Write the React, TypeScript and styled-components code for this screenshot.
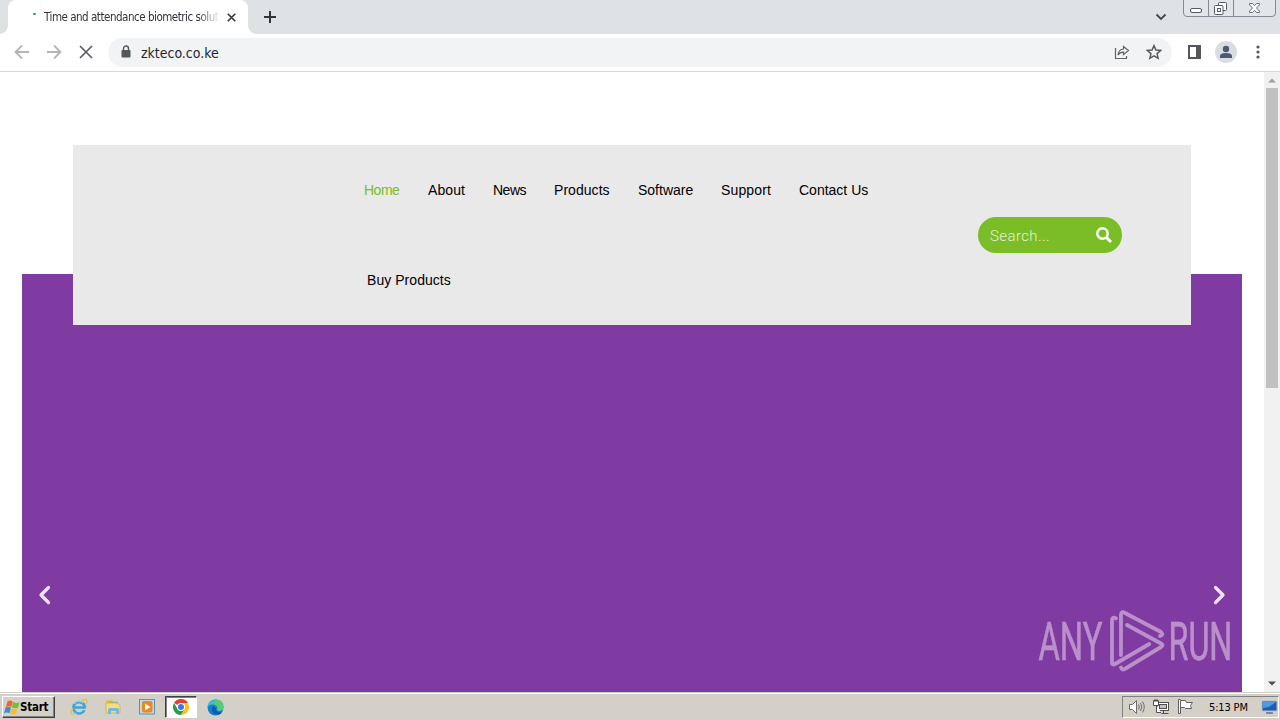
import React from "react";
import styled, { createGlobalStyle } from "styled-components";

const GlobalStyle = createGlobalStyle`
  * { box-sizing: border-box; }
  body {
    margin: 0;
    overflow: hidden;
    font-family: "Liberation Sans", Arial, sans-serif;
  }
  svg { display: block; flex: none; }
`;

const Screen = styled.div`
  display: flex;
  flex-direction: column;
  width: 1280px;
  height: 720px;
  background: #fff;
  overflow: hidden;
`;

const TabStrip = styled.div`
  display: flex;
  height: 34px;
  background: #dee1e6;
`;

const TabCurve = styled.div<{ $side: "left" | "right" }>`
  width: 8px;
  height: 34px;
  background: radial-gradient(circle at ${(p) => (p.$side === "left" ? "0 26px" : "8px 26px")}, #dee1e6 7.5px, #fff 8px);
  clip-path: inset(26px 0 0 0);
`;

const Tab = styled.div`
  display: flex;
  align-items: center;
  width: 240px;
  height: 34px;
  padding: 0 12px 0 24px;
  border-radius: 8px 8px 0 0;
  background: #fff;
`;

const Spinner = styled.div`
  width: 3px;
  height: 2px;
  margin: -6px 8px 0 1px;
  border-radius: 1px;
  background: #3f7de0;
`;

const TabTitle = styled.div`
  width: 174px;
  overflow: hidden;
  white-space: nowrap;
  font: 11.5px "DejaVu Sans Condensed", "DejaVu Sans", sans-serif;
  font-stretch: condensed;
  letter-spacing: -0.48px;
  color: #30343a;
  mask-image: linear-gradient(to right, #000 154px, transparent 176px);
`;

const TabClose = styled.div`
  margin-left: auto;
`;

const NewTab = styled.div`
  padding: 11px 0 0 8px;
`;

const WindowControls = styled.div`
  display: flex;
  align-items: flex-start;
  margin-left: auto;
  gap: 16px;
`;

const Chevron = styled.div`
  padding-top: 13px;
`;

const Toolbar = styled.div`
  display: flex;
  align-items: center;
  height: 38px;
  padding: 0 14px 1px 14px;
  border-bottom: 1px solid #d5d7da;
`;

const NavButtons = styled.div`
  display: flex;
  gap: 16px;
  margin-right: 14px;
`;

const AddressBar = styled.div`
  display: flex;
  align-items: center;
  width: 1064px;
  height: 29px;
  padding: 0 10px 0 12px;
  border-radius: 15px;
  background: #f1f3f4;
`;

const Address = styled.div`
  flex: 1;
  margin-left: 9px;
  padding-top: 1px;
  font: 14px "DejaVu Sans Condensed", "DejaVu Sans", sans-serif;
  font-stretch: condensed;
  letter-spacing: -0.02px;
  color: #24282d;
`;

const AddressIcons = styled.div`
  display: flex;
  gap: 16px;
`;

const ToolbarIcons = styled.div`
  display: flex;
  align-items: center;
  margin-left: 15px;
`;

const Avatar = styled.div`
  display: flex;
  align-items: center;
  justify-content: center;
  width: 22px;
  height: 22px;
  margin: 0 15px 0 13px;
  border-radius: 50%;
  background: #d9dde2;
`;

const Viewport = styled.div`
  display: flex;
  height: 620px;
`;

const Page = styled.div`
  position: relative;
  display: flex;
  width: 1264px;
  padding: 202px 22px 0;
`;

const Slider = styled.div`
  display: flex;
  justify-content: space-between;
  width: 1220px;
  height: 418px;
  padding: 311px 16px 0;
  background: #803ba2;
`;

/* The header floats over the top edge of the slider */
const Header = styled.header`
  position: absolute;
  top: 73px;
  left: 73px;
  display: flex;
  width: 1118px;
  height: 180px;
  padding-left: 277px;
  align-items: center;
  background: #e9e9e9;
`;

const Menu = styled.nav`
  display: flex;
  flex-wrap: wrap;
  width: 628px;
`;

const MenuItem = styled.a<{ $width: number; $active?: boolean; $indent?: number; $spacing?: number }>`
  width: ${(p) => p.$width}px;
  margin-left: ${(p) => p.$indent || 0}px;
  padding-left: 14px;
  font-size: 14px;
  line-height: 90px;
  letter-spacing: ${(p) => p.$spacing || 0}px;
  white-space: nowrap;
  color: ${(p) => (p.$active ? "#7abd26" : "#000")};
`;

const Search = styled.div`
  display: flex;
  align-items: center;
  justify-content: space-between;
  width: 144px;
  height: 36px;
  padding: 0 10px 0 12px;
  border-radius: 18px;
  background: #7abd26;
`;

const Placeholder = styled.span`
  padding-top: 2px;
  font: 300 15px Roboto, sans-serif;
  letter-spacing: 0.4px;
  color: #e6f3d3;
`;

const Watermark = styled.svg`
  position: absolute;
  left: 1034px;
  top: 532px;
`;

const ScrollBar = styled.div`
  display: flex;
  flex-direction: column;
  align-items: center;
  width: 16px;
  background: #f1f1f1;
`;

const ScrollArrow = styled.div<{ $down?: boolean }>`
  display: flex;
  align-items: center;
  justify-content: center;
  width: 16px;
  height: ${(p) => (p.$down ? 18 : 16)}px;
  margin-top: ${(p) => (p.$down ? "auto" : "0")};
`;

const Thumb = styled.div`
  width: 12px;
  height: 300px;
  background: #c1c1c1;
`;

const Taskbar = styled.div`
  display: flex;
  align-items: center;
  height: 28px;
  padding: 2px 1px 1px 2px;
  border-top: 1px solid #d4d0c8;
  box-shadow: inset 0 1px 0 #fff;
  background: #d4d0c8;
`;

const StartButton = styled.div`
  display: flex;
  align-items: center;
  width: 53px;
  height: 22px;
  padding-left: 1px;
  border: 1px solid;
  border-color: #fff #404040 #404040 #fff;
  box-shadow: inset -1px -1px 0 #808080;
  font: bold 11.5px "DejaVu Sans Condensed", "DejaVu Sans", sans-serif;
  font-stretch: condensed;
  letter-spacing: -0.25px;
  color: #000;
`;

const TaskButtons = styled.div`
  display: flex;
  margin-left: 8px;
  gap: 2px;
`;

const TaskButton = styled.div<{ $pressed?: boolean }>`
  display: flex;
  align-items: center;
  justify-content: center;
  width: 32px;
  height: 22px;
  border: 1px solid transparent;
  ${(p) => p.$pressed && "border-color: #404040 #fff #fff #404040; background: #fff; box-shadow: inset 1px 1px 0 #808080;"}
`;

const Tray = styled.div`
  display: flex;
  align-items: center;
  width: 157px;
  height: 22px;
  margin-left: auto;
  padding-left: 5px;
  gap: 7px;
  border: 1px solid;
  border-color: #808080 #fff #fff #808080;
`;

const Clock = styled.div`
  width: 43px;
  margin: 0 2px 0 8px;
  white-space: nowrap;
  font: 11px "DejaVu Sans Condensed", "DejaVu Sans", sans-serif;
  font-stretch: condensed;
  letter-spacing: -0.15px;
  color: #000;
`;

const menuItems = [
  { label: "Home", width: 64, active: true, spacing: -0.5 },
  { label: "About", width: 65, spacing: 0.1 },
  { label: "News", width: 61, spacing: -0.5 },
  { label: "Products", width: 84, spacing: 0.05 },
  { label: "Software", width: 83, spacing: 0 },
  { label: "Support", width: 78, spacing: 0.15 },
  { label: "Contact Us", width: 100, spacing: 0 },
  { label: "Buy Products", width: 120, indent: 3, spacing: 0.05 },
];

const CloseIcon = ({ size, color, width }: { size: number; color: string; width: number }) => (
  <svg width={size} height={size} viewBox="0 0 12 12" stroke={color} strokeWidth={width}>
    <path d="M1 1 11 11M11 1 1 11" />
  </svg>
);

const ArrowIcon = ({ right }: { right?: boolean }) => (
  <svg width="16" height="16" viewBox="0 0 16 16" fill="none" stroke="#b3b5b8" strokeWidth="1.8">
    <path d={right ? "M1 8H14M8 1.5 14.5 8 8 14.5" : "M15 8H2M8 1.5 1.5 8 8 14.5"} />
  </svg>
);

const WindowButtons = () => (
  <svg width="97" height="18" viewBox="0 0 97 18" fill="none">
    <path d="M.5 0V13Q.5 16.5 4 16.5H89Q92.500 16.500 92.500 13V0" fill="#e2e5e9" stroke="#858993" />
    <path d="M25.500 0V16M50.500 0V16" stroke="#858993" />
    <rect x="7.500" y="8.500" width="11" height="4" rx="1.500" fill="#fff" stroke="#555a63" />
    <rect x="35.500" y="2.500" width="8" height="8" rx="1" fill="#fff" stroke="#555a63" />
    <rect x="31.500" y="5.500" width="8.500" height="9" rx="1" fill="#fff" stroke="#555a63" />
    <rect x="34.500" y="8.500" width="3" height="3" stroke="#555a63" />
    <path d="M66.500 3.500H69.500L71.500 5.700 73.500 3.500H76.500V4.800L73.500 8 76.500 11.200V12.500H73.500L71.500 10.300 69.500 12.500H66.500V11.200L69.500 8 66.500 4.800Z" fill="#fff" stroke="#6a6e76" />
  </svg>
);

const SlideArrow = ({ right }: { right?: boolean }) => (
  <svg width="14" height="20" viewBox="0 0 14 20" fill="none" stroke="#efe2f3" strokeWidth="3.2" strokeLinecap="round" strokeLinejoin="round">
    <path d={right ? "M3.500 2.500 11 10 3.500 17.500" : "M10.500 2.500 3 10 10.500 17.500"} />
  </svg>
);

const AnyRun = () => (
  <Watermark width="202" height="76" viewBox="0 0 202 76" opacity="0.5">
    <g fill="#f2e4f2" stroke="#f2e4f2" strokeWidth=".6" fontFamily="Roboto, sans-serif" fontSize="53">
      <text transform="translate(4.500 56) scale(.62 1)" textLength="103" lengthAdjust="spacingAndGlyphs">ANY</text>
      <text transform="translate(134.500 56) scale(.62 1)" textLength="103" lengthAdjust="spacingAndGlyphs">RUN</text>
    </g>
    <g fill="none" stroke="#f2e4f2" strokeWidth="3.800" strokeLinejoin="round" strokeLinecap="round">
      <path d="M82 14.300Q78 12 78 17V58.500Q78 61.500 81 60L115.300 40" />
      <path d="M87 51V11Q87 6.500 91 9L127 28Q130 31 126 32" />
      <path d="M93 21 127 39.500Q130 41 127 43L91.500 64.500Q88 67 87 63.500" />
    </g>
  </Watermark>
);

const InternetExplorerIcon = () => (
  <svg width="18" height="18" viewBox="0 0 18 18" fill="none">
    <path d="M14.300 12.200A5.700 5.700 0 1 1 14.800 9.500H4.500" stroke="#3aa6de" strokeWidth="2.600" />
    <path d="M12 2.800C17-.2 18.500 2.500 15.500 6.500M3 10C-.8 15 1 18 6 15.200" stroke="#e8c04a" strokeWidth="1.400" />
    <path d="M4 6Q9 1 13 5" stroke="#9edcf6" strokeWidth="1" />
  </svg>
);

const FolderIcon = () => (
  <svg width="18" height="18" viewBox="0 0 18 18">
    <path d="M2 3 3 2H8L9 4H14V7H2Z" fill="#e4bd57" />
    <rect x="5" y="3.500" width="9" height="6" fill="#80c88b" />
    <path d="M2 5H13L16 7V15H2Z" fill="#f6dc83" stroke="#d2a944" strokeWidth=".7" />
    <path d="M4 16V12Q4 10 6 10H13Q15 10 15 12V16H12V13H7V16Z" fill="#72b9df" />
  </svg>
);

const PlayerIcon = () => (
  <svg width="18" height="18" viewBox="0 0 18 18">
    <rect x="1.500" y="1.500" width="15" height="14.500" fill="#b9d9ec" stroke="#5892ba" />
    <rect x="4" y="3" width="10.500" height="11.500" rx="2" fill="#f28718" />
    <path d="M7 5.500 12.500 9 7 12.500Z" fill="#fff" />
  </svg>
);

const ChromeIcon = () => (
  <svg width="16" height="16" viewBox="0 0 16 16">
    <path d="M8 8 1.070 4A8 8 0 0 1 14.930 4Z" fill="#e43e2f" />
    <path d="M8 4H14.930A8 8 0 0 1 8 16L11.500 10Z" fill="#fbc116" />
    <path d="M1.070 4A8 8 0 0 0 8 16L11.500 10H8L4.500 10Z" fill="#2b9b49" />
    <circle cx="8" cy="8" r="4" fill="#fff" />
    <circle cx="8" cy="8" r="3" fill="#3b78dd" />
  </svg>
);

const EdgeIcon = () => (
  <svg width="17" height="17" viewBox="0 0 17 17">
    <circle cx="8.500" cy="8.500" r="8" fill="#1680cf" />
    <path d="M.5 8C1-1 15-2 16.500 7.500 17 12 12 12.500 10 11 12 8 9 5 5.500 5.500 3 5.700 1 7 .5 8Z" fill="#38bfd0" />
    <path d="M9 1C14 0 17 4 16.500 8.500 16 12 12 12 10 11 12 8 9 6 7 5.500Z" fill="#57cc76" />
    <path d="M6 7C3 11 6 16 11 15.800 13 15.500 14.500 14 15 13 12 14 9 12.500 9 10.500 9 9 8 8 6 7Z" fill="#1559a6" />
  </svg>
);

const StartFlag = () => (
  <svg width="16" height="17" viewBox="0 0 16 17">
    <path d="M3.500 2.500Q6 .5 8.800 2.500L7.200 8Q4.500 6.500 1.800 8Z" fill="#ed6331" />
    <path d="M9.300 2.800Q12 5 15.500 3.200L14 8.700Q11 10 7.700 8.300Z" fill="#79b843" />
    <path d="M1.600 8.500Q4 7 7 8.700L5.400 14.300Q3 12.500 0 14.300Z" fill="#398fd1" />
    <path d="M7.500 9Q10 11 13.800 9.300L12.200 14.800Q9 16.500 6 14.600Z" fill="#f5bd30" />
  </svg>
);

const TrayIcons = () => (
  <>
    <svg width="18" height="16" viewBox="0 0 18 16" fill="none" stroke="#6c6c6c">
      <path d="M1.500 5.500H4.500L8.500 1.500V14.500L4.500 10.500H1.500Z" fill="#fff" />
      <path d="M10.500 5.500Q12 8 10.500 10.500M12.500 4Q15 8 12.500 12M14.500 2.500Q18 8 14.500 13.500" />
    </svg>
    <svg width="17" height="16" viewBox="0 0 17 16" fill="#fff" stroke="#505050">
      <rect x="4.500" y="3.500" width="11" height="8" />
      <rect x="6.500" y="5.500" width="7" height="4" fill="#c4c4c4" />
      <path d="M8.500 14.500H15.500M10.500 12V14M3.500 6V13.500H8M.5 1.500H5.500V6.500H.5ZM2 0V3M4 0V3" />
    </svg>
    <svg width="17" height="16" viewBox="0 0 17 16" fill="#fff" stroke="#606060">
      <path d="M1.500 .5H3.500V1.500H8.500L9.500 3.500H15.500L13.500 6.500 14.500 9.500H8.500L7.500 8.500H3.500V14.500H1.500Z" />
      <path d="M3.500 1.500V8.500" />
    </svg>
  </>
);

function App() {
  return (
    <Screen>
      <GlobalStyle />
      <TabStrip>
        <TabCurve $side="left" />
        <Tab>
          <Spinner />
          <TabTitle>Time and attendance biometric soluti</TabTitle>
          <TabClose><CloseIcon size={9} color="#34373b" width={2.2} /></TabClose>
        </Tab>
        <TabCurve $side="right" />
        <NewTab>
          <svg width="12" height="12" viewBox="0 0 12 12" stroke="#303339" strokeWidth="2">
            <path d="M6 0V12M0 6H12" />
          </svg>
        </NewTab>
        <WindowControls>
          <Chevron>
            <svg width="12" height="8" viewBox="0 0 12 8" fill="none" stroke="#44474d" strokeWidth="1.800">
              <path d="M1.500 1.500 6 6 10.500 1.500" />
            </svg>
          </Chevron>
          <WindowButtons />
        </WindowControls>
      </TabStrip>
      <Toolbar>
        <NavButtons>
          <ArrowIcon />
          <ArrowIcon right />
          <svg width="16" height="16" viewBox="0 0 16 16" stroke="#5b5e62" strokeWidth="1.700">
            <path d="M2 2 14 14M14 2 2 14" />
          </svg>
        </NavButtons>
        <AddressBar>
          <svg width="12" height="14" viewBox="0 0 12 14">
            <path d="M3.500 6V3.500A2.500 2.500 0 0 1 8.500 3.500V6" fill="none" stroke="#55595e" strokeWidth="1.400" />
            <rect x="1.500" y="5" width="9" height="7.500" rx="1" fill="#55595e" />
          </svg>
          <Address>zkteco.co.ke</Address>
          <AddressIcons>
            <svg width="16" height="16" viewBox="0 0 16 16" fill="none" stroke="#5f6368" strokeWidth="1.200">
              <path d="M1.500 4V14.500H12.500V12M9.500 2.500 14.500 6.500 9.500 10.500V8.200Q6 8 4 11 4.500 5.500 9.500 5Z" />
            </svg>
            <svg width="16" height="16" viewBox="0 0 24 24" fill="none" stroke="#55595e" strokeWidth="2.200">
              <path d="M12 2.500 14.900 9.100 22 9.700 16.600 14.400 18.200 21.400 12 17.700 5.800 21.400 7.400 14.400 2 9.700 9.100 9.100Z" />
            </svg>
          </AddressIcons>
        </AddressBar>
        <ToolbarIcons>
          <svg width="15" height="14" viewBox="0 0 15 14">
            <path d="M2 1H13V13H2Z" fill="none" stroke="#55575c" strokeWidth="2" />
            <rect x="9" y="0" width="5" height="14" fill="#55575c" />
          </svg>
          <Avatar>
            <svg width="14" height="14" viewBox="0 0 14 14" fill="#4b5974">
              <circle cx="7" cy="4" r="3.200" />
              <path d="M1 13V11Q1 8 7 8T13 11V13Z" />
            </svg>
          </Avatar>
          <svg width="12" height="14" viewBox="0 0 12 14" fill="#55585d">
            <circle cx="6" cy="2" r="1.600" /><circle cx="6" cy="7" r="1.600" /><circle cx="6" cy="12" r="1.600" />
          </svg>
        </ToolbarIcons>
      </Toolbar>
      <Viewport>
        <Page>
          <Slider>
            <SlideArrow />
            <SlideArrow right />
          </Slider>
          <Header>
            <Menu>
              {menuItems.map((item) => (
                <MenuItem key={item.label} $width={item.width} $active={item.active} $indent={item.indent} $spacing={item.spacing}>
                  {item.label}
                </MenuItem>
              ))}
            </Menu>
            <Search>
              <Placeholder>Search...</Placeholder>
              <svg width="16" height="16" viewBox="0 0 16 16" fill="none" stroke="#fff">
                <circle cx="6.500" cy="6.500" r="5.200" strokeWidth="2.500" />
                <path d="M10.500 10.500 15 15" strokeWidth="3" />
              </svg>
            </Search>
          </Header>
          <AnyRun />
        </Page>
        <ScrollBar>
          <ScrollArrow>
            <svg width="8" height="5" viewBox="0 0 8 5"><path d="M0 4.500 4 .5 8 4.500Z" fill="#a0a0a0" /></svg>
          </ScrollArrow>
          <Thumb />
          <ScrollArrow $down>
            <svg width="8" height="5" viewBox="0 0 8 5"><path d="M0 .5 4 4.500 8 .5Z" fill="#505050" /></svg>
          </ScrollArrow>
        </ScrollBar>
      </Viewport>
      <Taskbar>
        <StartButton><StartFlag />Start</StartButton>
        <TaskButtons>
          <TaskButton><InternetExplorerIcon /></TaskButton>
          <TaskButton><FolderIcon /></TaskButton>
          <TaskButton><PlayerIcon /></TaskButton>
          <TaskButton $pressed><ChromeIcon /></TaskButton>
          <TaskButton><EdgeIcon /></TaskButton>
        </TaskButtons>
        <Tray>
          <TrayIcons />
          <Clock>5:13 PM</Clock>
          <svg width="17" height="16" viewBox="0 0 17 16">
            <rect x="1" y="2" width="15" height="10" rx="1" fill="#245ab0" stroke="#a9bdd4" />
            <path d="M2 3H15L8 8 2 9Z" fill="#4f9be0" />
            <path d="M5 14H12" stroke="#56708f" strokeWidth="1.500" />
          </svg>
        </Tray>
      </Taskbar>
    </Screen>
  );
}

export default App;
